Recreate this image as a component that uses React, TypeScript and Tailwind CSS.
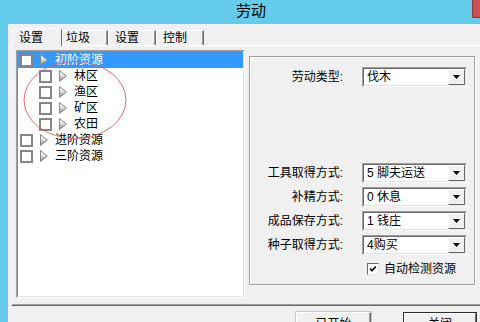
import React from "react";

const Tri = () => (
  <svg width="8" height="12" viewBox="0 0 8 12" className="shrink-0">
    <defs>
      <linearGradient id="tg" x1="0" y1="0" x2="0" y2="1">
        <stop offset="0" stopColor="#ffffff" />
        <stop offset="0.45" stopColor="#e0e0e0" />
        <stop offset="1" stopColor="#7a7a7a" />
      </linearGradient>
    </defs>
    <polygon points="0.5,0.5 7.5,6 0.5,11.5" fill="url(#tg)" stroke="#8a8a8a" strokeWidth="1" />
  </svg>
);

const Box = () => (
  <div className="w-[13px] h-[13px] shrink-0 border-2 border-[#868686] bg-white" />
);

const TreeRow = ({ label, indent, selected }: { label: string; indent: number; selected?: boolean }) => (
  <div
    className={
      "flex items-center h-[16px] shrink-0 " + (selected ? "bg-[#3399FF] text-white" : "text-black")
    }
  >
    <div style={{ width: indent }} className="shrink-0" />
    <Box />
    <div className="w-[7px] shrink-0" />
    <Tri />
    <div className="w-[7px] shrink-0" />
    <span className="text-[12px] leading-[16px]">{label}</span>
  </div>
);

const Combo = ({ value }: { value: string }) => (
  <div className="w-[105px] h-[20px] shrink-0 border border-t-[#A0A0A0] border-l-[#A0A0A0] border-r-white border-b-white">
    <div className="w-full h-full border border-t-[#696969] border-l-[#696969] border-r-[#E3E3E3] border-b-[#E3E3E3] bg-white flex items-center">
      <span className="flex-1 pl-[3px] text-[12px] leading-[16px] text-black whitespace-pre">{value}</span>
      <div className="w-[17px] h-[16px] border border-t-white border-l-white border-r-[#696969] border-b-[#696969] bg-[#F0F0F0] flex items-center justify-center">
        <svg width="7" height="4" viewBox="0 0 7 4">
          <polygon points="0,0 7,0 3.5,4" fill="#000" />
        </svg>
      </div>
    </div>
  </div>
);

const FieldRow = ({ label, value }: { label: string; value: string }) => (
  <div className="flex items-center h-[20px] shrink-0">
    <div className="w-[93px] shrink-0 text-right text-[12px] leading-[16px] text-black whitespace-pre">{label}</div>
    <div className="w-[19px] shrink-0" />
    <Combo value={value} />
  </div>
);

export default function App() {
  return (
    <div className="w-[480px] h-[322px] overflow-hidden bg-[#64CBEA] flex flex-col font-['Liberation_Sans','Noto_Sans_CJK_SC',sans-serif]">
      {/* Title bar */}
      <div className="h-[24px] shrink-0 flex">
        <div className="ml-[236px] text-[15px] leading-[22px] text-black">劳动</div>
        <div className="ml-auto w-[8px] h-[18px] bg-[#C75050] border-l border-b border-[#8a3c3c]" />
      </div>
      <div className="flex flex-1 min-h-0">
        <div className="w-[8px] shrink-0" />
        <div className="flex-1 bg-[#F0F0F0] flex flex-col pl-[3px] pt-[4px] min-w-[600px]">
          {/* Tabs */}
          <div className="flex items-end h-[17px] pl-[1px] shrink-0">
            <div className="relative z-10 w-[50px] h-[18px] -mb-[1px] bg-[#F0F0F0] border-l border-t border-white border-r border-r-[#696969] rounded-t-[2px] pl-[6px] flex items-center text-[12px] text-black">
              设置
            </div>
            <div className="w-[46px] h-[15px] border-t border-white border-r border-r-[#696969] shadow-[inset_-1px_0_0_#A0A0A0] pl-[4px] flex items-center text-[12px] text-black">
              垃圾
            </div>
            <div className="w-[48px] h-[15px] border-l border-t border-white border-r border-r-[#696969] shadow-[inset_-1px_0_0_#A0A0A0] pl-[6px] flex items-center text-[12px] text-black">
              设置
            </div>
            <div className="w-[48px] h-[15px] border-l border-t border-white border-r border-r-[#696969] shadow-[inset_-1px_0_0_#A0A0A0] pl-[6px] flex items-center text-[12px] text-black">
              控制
            </div>
          </div>
          {/* Panel */}
          <div className="h-[261px] shrink-0 border-t border-l border-white border-b border-b-[#696969] shadow-[inset_0_-1px_0_#A0A0A0] flex pl-[4px] pt-[4px] gap-[4px]">
            {/* Tree */}
            <div className="relative w-[229px] h-[248px] shrink-0 border border-t-[#A0A0A0] border-l-[#A0A0A0] border-r-white border-b-white">
              <div className="w-full h-full border border-t-[#8a8a8a] border-l-[#8a8a8a] border-r-[#E3E3E3] border-b-[#E3E3E3] bg-white flex flex-col">
                <TreeRow label="初阶资源" indent={2} selected />
                <TreeRow label="林区" indent={21} />
                <TreeRow label="渔区" indent={21} />
                <TreeRow label="矿区" indent={21} />
                <TreeRow label="农田" indent={21} />
                <TreeRow label="进阶资源" indent={2} />
                <TreeRow label="三阶资源" indent={2} />
              </div>
              <svg className="absolute left-0 top-0 pointer-events-none" width="229" height="248">
                <ellipse cx="58" cy="49" rx="51" ry="38.5" fill="none" stroke="#E25C5C" strokeWidth="1" opacity="0.9" />
              </svg>
            </div>
            {/* Group box */}
            <div className="mt-[6px] w-[226px] h-[229px] shrink-0 border border-[#A0A0A0] shadow-[inset_1px_1px_0_#fff,1px_1px_0_#fff] flex flex-col pt-[10px]">
              <FieldRow label="劳动类型:" value="伐木" />
              <div className="h-[76px] shrink-0" />
              <div className="flex flex-col gap-[4px] shrink-0">
                <FieldRow label="工具取得方式:" value="5 脚夫运送" />
                <FieldRow label="补精方式:" value="0 休息" />
                <FieldRow label="成品保存方式:" value="1 钱庄" />
                <FieldRow label="种子取得方式:" value="4购买" />
              </div>
              <div className="flex items-center h-[14px] mt-[7px] pl-[117px] shrink-0">
                <div className="w-[12px] h-[12px] border border-t-[#696969] border-l-[#696969] border-r-[#E3E3E3] border-b-[#E3E3E3] bg-white flex items-center justify-center">
                  <svg width="8" height="8" viewBox="0 0 8 8">
                    <polyline points="1,3.5 3,5.5 7,1.5" fill="none" stroke="#000" strokeWidth="1.6" />
                  </svg>
                </div>
                <span className="ml-[5px] text-[12px] leading-[14px] text-black">自动检测资源</span>
              </div>
            </div>
          </div>
          {/* Buttons */}
          <div className="flex mt-[6px] pl-[285px] shrink-0">
            <div className="w-[75px] h-[23px] border border-t-white border-l-white border-r-[#696969] border-b-[#696969] shadow-[inset_-1px_-1px_0_#A0A0A0] outline outline-1 outline-[#C8C8C8] flex items-center justify-center text-[12px] text-black">
              已开始
            </div>
            <div className="w-[32px] shrink-0" />
            <div className="w-[74px] h-[23px] border border-[#303030] flex">
              <div className="flex-1 border border-t-white border-l-white border-r-[#696969] border-b-[#696969] flex items-center justify-center text-[12px] text-black">
                关闭
              </div>
            </div>
          </div>
        </div>
      </div>
    </div>
  );
}
